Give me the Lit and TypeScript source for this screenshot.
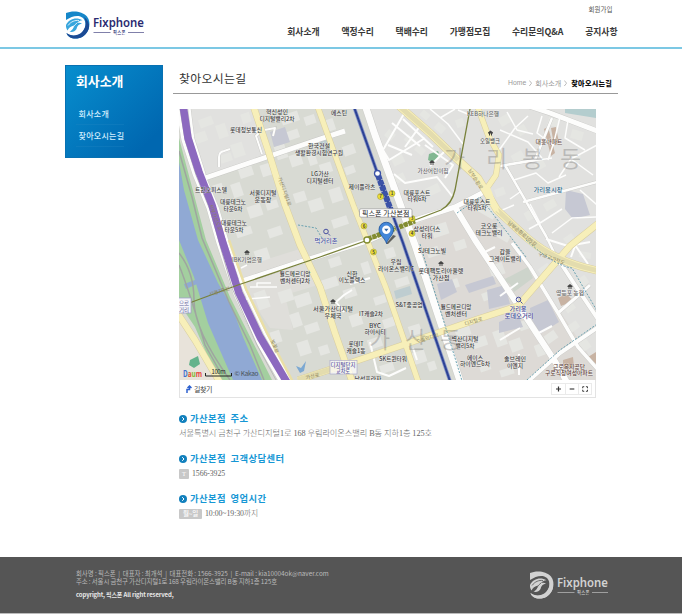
import { LitElement, html, svg, css } from "lit";
import { customElement, property } from "lit/decorators.js";

const FONT = css`"Noto Sans CJK KR", "Noto Sans CJK JP", "Noto Sans", sans-serif`;

@customElement("fix-logo")
class FixLogo extends LitElement {
  @property({ type: Boolean, reflect: true }) mono = false;
  static styles = css`
    :host { display: block; width: 80px; height: 29px; }
    svg { display: block; width: 80px; height: 29px; overflow: visible; }
    text { font-family: "Noto Sans", sans-serif; font-weight: 600; }
    .ko { font-family: ${FONT}; font-weight: 500; }
  `;
  render() {
    const c = this.mono
      ? { a: "#d2d2d2", b: "#d2d2d2", d: "#d2d2d2", t: "#d2d2d2", bg: "#555" }
      : { a: "#1687c9", b: "#38a6dd", d: "#1b4a94", t: "#2a2a70", bg: "#fff" };
    return html`<svg viewBox="0 0 80 29">
      <path fill=${c.a} d="M1 2C7-.6 17-.4 22 5.5C27 12 24 22 17 26C11 29.2 3 27.500 1.500 22C5 25.500 12 25.500 16 22.500C21 18.500 22 11 18 7C14 3.300 7 4.800 1 9Z"/>
      <path fill=${c.d} d="M19 6C26 11 26 20 18 25.500C11 29.500 3 27.500 1.500 22C6 25.500 12 25 16 22C21 17.500 22 11 19 6Z"/>
      <path fill=${c.b} d="M1 14C4 8 11 5.800 17.500 9.200C15 9.500 13 10.500 12 12C14 11.500 16 11.700 17 12.500C14 13 12 15 11.500 18C10 20.500 7 21.500 4.500 20.500C8 19 8.500 16.500 9 14.500C6 15 3.500 17 2.500 19.500C1.500 18 .8 16 1 14Z"/>
      <path fill="none" stroke=${c.bg} stroke-width=".8" d="M3 14.500C6 10.500 10 9 14 9.500M5 19C8 17.500 9 14 12 12"/>
      <text x="28" y="15.800" font-size="12" textLength="51" lengthAdjust="spacingAndGlyphs" fill=${c.t}>Fixphone</text>
      <path stroke=${c.t} stroke-width=".6" d="M28.500 21.500H45.500M63 21.500H79"/>
      <text class="ko" x="48" y="23.200" font-size="4.300" textLength="12.500" fill=${c.t}>픽스폰</text>
    </svg>`;
  }
}

type Label = [number, number, string, number, string?];

// Centre x, baseline y, text, drawn width, optional colour.
const LABELS: Label[] = [
  [277, 114, "혁신성인", 22], [277, 120.500, "디지털밸리2차", 35],
  [246, 132, "롯데정보통신", 32],
  [319, 148, "한국건설", 22], [319, 155, "생활환경시험연구원", 48],
  [339, 114.500, "에스틴", 16],
  [483, 115.500, "KEB하나은행", 32, "#666"],
  [490, 143, "오일뱅크", 20, "#555"],
  [549, 144, "대흥아파트", 27, "#6b5048"],
  [433, 173, "가산어린이집", 31, "#666"],
  [320, 176, "LG가산", 18], [320, 183, "디지털센터", 27],
  [362, 188.500, "제이플라츠", 27],
  [548, 192, "가리봉시장", 29, "#2b6488"],
  [211, 192, "트윈오피스텔", 32],
  [263, 194.500, "서울디지털", 27], [263, 201.500, "운동장", 17],
  [233, 204, "대륭테크노", 26], [233, 211, "타운6차", 19],
  [234, 225, "대륭테크노", 26], [234, 232, "타운5차", 19],
  [417, 194.500, "대륭포스트", 27], [417, 201, "타워6차", 19],
  [477, 203.500, "대륭포스트", 27], [477, 210, "타워5차", 19],
  [489, 228, "코오롱", 17], [489, 235, "테크노밸리", 27],
  [427, 231, "삼성리더스", 27], [427, 237.500, "타워", 11],
  [326, 242.500, "먹거리촌", 23, "#474fa0"],
  [432, 252.500, "SJ테크노빌", 28],
  [505, 254, "갑을", 11], [505, 260.500, "그레이트밸리", 32],
  [396, 264, "우림", 11], [396, 270.500, "라이온스밸리C", 36],
  [247, 261.500, "IBK기업은행", 30, "#666"],
  [441, 272.500, "롯데팩토리아울렛", 45], [441, 279.500, "가산점", 17],
  [295, 275.500, "월드메르디앙", 31], [295, 282.500, "벤처센터2차", 30],
  [352, 275.500, "신한", 11], [352, 282, "이노플렉스", 27],
  [570, 295, "영등포 농협", 28, "#666"],
  [333, 310.500, "서울가산디지털", 40], [333, 317.500, "우체국", 17],
  [371, 316, "IT캐슬2차", 24],
  [409, 307, "S&T중공업", 27],
  [456, 308.500, "월드메르디앙", 31], [456, 315.500, "벤처센터", 22],
  [518, 310.500, "가리봉", 17, "#3b4394"], [519, 318, "로데오거리", 29, "#3b4394"],
  [375, 327.500, "BYC", 12], [375, 334, "하이시티", 21],
  [356, 345.500, "롯데IT", 15], [356, 352.500, "캐슬1동", 19],
  [465, 341, "벽산디지털", 27], [465, 348, "밸리5차", 19],
  [393, 361, "SK트윈타워", 28],
  [475, 359.500, "에이스", 16], [475, 366.200, "하이엔드6차", 30],
  [515, 360.500, "솔브레인", 22], [515, 367.500, "이엔지", 16],
  [343, 366.500, "디지털단지", 25, "#5c5a9c"], [343, 372.700, "교차로", 14, "#5c5a9c"],
  [569, 368.500, "근로복지공단", 32, "#5b4038"], [569, 375, "구로직장여성아파트", 48, "#5b4038"],
  [368, 381, "남성프라자", 27],
];

// Blocks drawn as rotated rectangles: x, y, width, height, angle.
const BUILDINGS: number[][] = [
  [206, 122, 14, 9, -20], [199, 138, 16, 10, -20], [222, 131, 10, 14, -18], [226, 158, 12, 8, -18],
  [238, 150, 12, 14, -18], [246, 118, 9, 10, -18], [290, 118, 18, 10, -18], [292, 135, 14, 9, -18],
  [281, 152, 11, 14, -18], [296, 160, 12, 12, -18], [312, 158, 8, 14, -18], [326, 168, 12, 10, -18],
  [246, 172, 14, 10, -18], [266, 170, 10, 12, -18], [237, 190, 10, 14, -18], [272, 205, 12, 8, -18],
  [255, 211, 14, 12, -18], [218, 188, 10, 8, -18], [244, 232, 16, 8, -18], [275, 232, 14, 9, -18],
  [300, 197, 12, 10, -18], [316, 205, 14, 12, -18], [336, 195, 12, 14, -18], [340, 222, 16, 9, -18],
  [349, 150, 12, 10, -20], [350, 170, 10, 8, -20], [310, 120, 11, 9, -18], [330, 125, 9, 12, -18],
  [262, 255, 14, 12, -18], [230, 266, 8, 12, -18], [262, 300, 12, 18, -20], [286, 296, 14, 12, -18],
  [303, 300, 16, 12, -18], [296, 320, 10, 14, -18], [312, 328, 14, 9, -18], [304, 348, 12, 14, -18],
  [324, 350, 10, 9, -18], [276, 337, 10, 12, -18], [335, 262, 12, 9, -18], [330, 283, 16, 10, -18],
  [350, 293, 13, 9, -18], [366, 268, 8, 12, -18], [356, 320, 12, 12, -18], [375, 343, 14, 10, -18],
  [380, 300, 12, 8, -18], [402, 282, 14, 8, -18], [391, 322, 16, 9, -18], [415, 330, 12, 10, -18],
  [387, 368, 14, 8, -18], [417, 358, 18, 12, -18], [432, 366, 8, 9, -18], [390, 253, 10, 10, -18],
  [440, 230, 16, 12, -18], [433, 252, 12, 9, -18], [460, 245, 12, 9, -18], [450, 285, 18, 9, -18],
  [488, 210, 18, 12, 30], [503, 235, 15, 9, 30], [497, 270, 14, 12, -20], [490, 295, 16, 8, -20],
  [463, 332, 15, 9, -18], [480, 342, 14, 10, -18], [500, 338, 11, 16, -20], [516, 345, 12, 12, -20],
  [485, 367, 11, 8, -18], [507, 372, 14, 7, -18], [525, 325, 12, 9, -20], [540, 350, 9, 12, -20],
  [545, 270, 12, 9, -35], [568, 305, 10, 14, -35], [582, 282, 12, 9, -35], [551, 337, 12, 9, -35],
  [573, 327, 12, 8, -35], [585, 345, 9, 10, -35], [570, 240, 10, 10, -35], [585, 255, 12, 6, 10],
  [460, 123, 8, 8, -20], [505, 120, 12, 9, -30], [522, 130, 9, 9, -30], [518, 157, 12, 9, -30],
  [553, 122, 10, 8, 15], [577, 135, 12, 9, 15], [575, 158, 10, 9, 15], [540, 165, 10, 8, -30],
  [500, 192, 10, 8, -20], [530, 215, 10, 9, -30], [550, 205, 12, 8, -30], [410, 140, 10, 8, 40],
  [390, 135, 9, 8, 40], [398, 160, 12, 9, -25], [420, 150, 10, 7, 40], [400, 178, 10, 8, -25],
  [433, 190, 14, 9, -25], [440, 128, 10, 8, 40], [425, 115, 9, 7, 40],
];

const WHITE: [string, number][] = [
  ["M178 104L184 140L195 174L209 208L219 243L236 294L257 339L283 384", 5],
  ["M189 105L193 138L204 173L205 178L218 209L227 240L244 290L265 334L293 384", 2.500],
  ["M205 178L320 139L345 131", 5],
  ["M264 128L256 136L262 154M249 133L275 128L273 136", 2],
  ["M219 167V157Q219 152 224 151L230 149", 2],
  ["M236 283L300 262L370 240L415 220L455 207L484 192", 5],
  ["M365 105L375 135L415 245L432 297L461 384", 7],
  ["M455 207L475 240L518 305L556 363L568 384", 6],
  ["M505 165L546 236L560 265M500 166L535 160L552 118M523 202L560 192L597 182", 2.500],
  ["M526 105L550 113L600 132", 5],
  ["M512 243L530 267L558 313L578 347L600 372", 3.500],
  ["M562 265L577 288L600 322", 4],
  ["M525 384L560 353L600 326", 4],
  ["M558 313L580 294L590 285", 3],
  ["M405 112L383 150L389 160L425 138M392 123L420 146M403 119L433 147M420 126L405 147M388 145L412 155M425 145L453 165L445 178M394 174L405 183L437 177L452 196M430 166L440 156L446 150", 2],
  ["M430 109L448 124L463 144M440 118L455 109M458 110L470 115M497 153L515 128L528 116M500 130L528 142L542 158M507 112L517 130L533 134M542 116L537 133L553 145L548 160M560 117L553 146M568 120L565 138L585 150M597 145L571 159L559 177M571 159L593 175M505 165L552 158M514 180L536 173L548 183L566 175M520 192L510 199M530 204L540 223L562 209M540 223L529 229M500 211L514 205M580 190L597 205M552 233L572 218L597 217", 1.500],
  ["M546 239L568 246L590 242M575 245L588 264M575 246L571 257", 2],
  ["M350 284L370 278M344 312L336 302L344 295L352 290M370 342L377 372L389 376L406 368M413 348L417 360", 2],
  ["M250 287H277M257 287V283H271M237 300L270 297M241 268L247 265", 1.500],
  ["M500 296L518 283M500 340L520 328M519 354V375M535 335L552 326M483 253L495 247", 2],
];

const YELLOW: [string, number][] = [
  ["M178 314L195 340L222 386", 7],
  ["M253 105L268 150L285 205L300 245L320 287L335 333L353 384", 7],
  ["M317 105L335 155L354 207L367 240L386 288L405 343L419 384", 6],
  ["M477 105L488 135L499 155L496 175L487 188", 6],
  ["M398 105L430 133L458 160L478 178L497 210L526 237Q556 263 600 271", 8],
  ["M600 222L570 246L518 306L475 320L400 346L350 363L298 380", 7],
];

@customElement("area-map")
class AreaMap extends LitElement {
  static styles = css`
    :host { display: block; height: 271px; }
    svg { display: block; width: 417px; height: 271px; }
    text { font-family: ${FONT}; }
    .label { font-size: 6.2px; fill: #3a3a3a; font-weight: 500; paint-order: stroke; stroke: #ffffffb0; stroke-width: .7px; text-anchor: middle; }
    .road { font-size: 5px; fill: #8b8460; text-anchor: middle; }
    .big { font-size: 23px; fill: #55555548; font-weight: 400; }
    .poi { fill: none; stroke-width: 1; }
    .exit { font-size: 4.500px; fill: #444; text-anchor: middle; font-weight: 700; }
  `;
  render() {
    const exits: [number, number, string][] = [[380.500, 196.500, "7"], [392, 193.500, "1"], [364, 226, "6"], [373.500, 252, "5"], [412, 218.500, "3"], [412, 233.500, "4"]];
    const shops = [[490.500, 133.500], [432, 163], [247, 253], [333, 302], [441, 264], [570, 287]];
    return html`<svg viewBox="179 109 417 271">
      <rect x="179" y="109" width="417" height="271" fill="#d8dad3"/>
      <path fill="#e1e1df" d="M189 109H254L270 155L206 178L193 140ZM365 109H596V380H461L415 245Z"/>
      <path fill="#dddad6" d="M478 195L515 243L600 372V380H461L432 297L415 225Z"/>
      <path fill="#dfdeda" d="M232 270L303 248L318 285L285 295L293 330L270 328Z"/>
      <path fill="#e8e3da" d="M179 314L220 380H179Z"/>
      <g fill="#e5e6e2">${BUILDINGS.map(([x, y, w, h, a]) => svg`<rect x=${x - w / 2} y=${y - h / 2} width=${w} height=${h} transform="rotate(${a} ${x} ${y})"/>`)}</g>
      <g fill="#c6c8d3">
        <path d="M270 132L285 127L290 142L274 147ZM465 285L493 276L496 284L469 293ZM487 290L505 285L510 304L489 309ZM499 322L518 314L523 327L499 333ZM530 308L548 300L559 322L540 334L531 318Z"/>
        <path d="M437 284L452 279L457 292L441 300ZM566 190L583 194L590 215L573 219L565 209Z"/>
        <path fill="#becdd0" d="M394 291L410 286L412 294L396 299ZM319 140L331 138L333 150L322 152Z"/>
        <path fill="#cdd4cb" d="M503 280L528 267L533 278L514 292L510 284Z"/>
      </g>
      <path fill="#b4cdce" d="M565 109H596V118L565 113Z"/>
      <path fill="#c8b3a3" d="M544 129L548 127L555 153L551 156ZM551 128L556 127L559 143L554 145ZM558 298L566 294L574 301L561 306ZM563 360L573 357L574 367L563 370ZM588 357L596 352V364Z"/>
      <path fill="#82b892" d="M429 154L438 151L440 156L434 163L428 160Z"/>
      <path fill="#7ca8d2" d="M296 366L301 368L306 361L304 371L300 373Z"/>

      <path fill="#a3cf9f" d="M179 138L188 172L206 240L230 297L272 380H218L195 327L179 303Z"/>
      <path fill="#90a9d4" d="M179 162L184 190L198 240L218 283L232 307L243 337L262 380H233L208 323L194 277L179 240Z"/>
      <path fill="#90a9d4" d="M184 284L195 280L197 284L186 289Z"/>
      <g fill="none" stroke="#9fa5a0" stroke-width="1.500">
        <path d="M179 151L192 197L202 238L229 302L250 345L264 380"/>
        <path d="M179 253Q194 272 194 300Q194 330 230 380M179 265Q189 290 205 345L219 370"/>
      </g>
      <g fill="none" stroke="#c8c8c5">${WHITE.slice(0, 14).map(([d, w]) => svg`<path d=${d} stroke-width=${w + 0.8}/>`)}</g>
      <g fill="none" stroke="#fdfdfc" stroke-linejoin="round">${WHITE.map(([d, w]) => svg`<path d=${d} stroke-width=${w}/>`)}</g>
      <g fill="none" stroke="#d8cea0" stroke-linejoin="round">${YELLOW.map(([d, w]) => svg`<path d=${d} stroke-width=${w}/>`)}</g>
      <g fill="none" stroke="#f7efb9" stroke-linejoin="round">${YELLOW.map(([d, w]) => svg`<path d=${d} stroke-width=${w - 1}/>`)}</g>
      <path fill="none" stroke="#e3dcae" stroke-width="5" d="M398 105L430 133L458 160M497 210L526 237Q556 263 600 271M298 380L350 363"/>
      <path fill="#f7efb9" d="M484 187L490 187L500 214L494 209Z"/>
      <path fill="none" stroke="#eadfa5" stroke-width="2.500" d="M229 240L246 289L267 333L294 384"/>
      <g fill="none" stroke="#5c9aab" stroke-width=".9" stroke-dasharray="2 1.500">
        <path d="M298 225L316 228L322 238M420 244L463 384M457 213L480 197L526 257M526 240Q555 266 572 268L600 316M527 380L560 350L600 322"/>
      </g>

      <path fill="none" stroke="#bababa" stroke-width="1" d="M180 109L185 140L196 175L210 210L232 288L257 345L276 380"/>
      <path fill="none" stroke="#8c69bf" stroke-width="7.500" stroke-linejoin="round" d="M183 105L188 138L199 172L212 205L222 240L239 293L260 337L288 384"/>
      <path fill="none" stroke="#78813a" stroke-width="1.300" d="M179 306L192 302L238 285L320 257L368 240L415 220L441 210Q452 204 455 190L470 109"/>
      <path stroke="#838d31" stroke-width="5" d="M368 239L415 221" stroke-dasharray="4 .8"/>
      <path fill="none" stroke="#8996c8" stroke-width="3.600" d="M354 107L377 172L403 243L435 337L451 384"/>
      <path fill="none" stroke="#2c4295" stroke-width="2" d="M354 107L377 172L403 243L435 337L451 384"/>
      <path stroke="#3b52a7" stroke-width="6" stroke-dasharray="5 .8" d="M378 175L393 216"/>

      <text class="big" x="444" y="167">가</text><text class="big" x="486" y="167">리</text>
      <text class="big" x="522" y="167">봉</text><text class="big" x="560" y="167">동</text>
      <text class="big" x="369" y="348">가</text><text class="big" x="405" y="348">산</text><text class="big" x="440" y="348">동</text>

      <text class="road" transform="translate(283 192) rotate(70)">가산디지털1로</text>
      <text class="road" transform="translate(214 218) rotate(70)">서부간선도로</text>
      <text class="road" transform="translate(220 293) rotate(-17)">서울7호선</text>
      <text class="road" transform="translate(273 347) rotate(68)">벚꽃로</text>
      <text class="road" transform="translate(474 180) rotate(58)">남부순환로</text>
      <text class="road" transform="translate(521 235) rotate(40)">남부순환로105길</text>
      <text class="road" transform="translate(551 260) rotate(20)">구로고가차도</text>
      <text class="road" transform="translate(474 323) rotate(-17)">디지털로</text>
      <text class="road" transform="translate(428 340) rotate(-17)">수출의다리</text>
      <text class="road" transform="translate(313 378) rotate(-15)">가산로</text>

      <rect x="330" y="360.500" width="27" height="13.500" fill="#ffffffb0" stroke="#a2a0ca" stroke-width=".6"/>
      <rect x="174" y="298" width="17" height="15" fill="#f5f5fa" stroke="#a2a0ca" stroke-width=".8"/>
      <text x="179" y="305" font-size="5.500" fill="#66669b">으로</text><text x="179" y="311.500" font-size="5.500" fill="#66669b">거리</text>
      <path fill="#64b38c" d="M190 360L198 356L200 364L194 368L189 365Z"/>

      ${shops.map(([x, y]) => svg`<path fill="#444" d="M${x - 2.500} ${y - 1}l2.500-2l2.500 2v1h-1v2h-1v-2h-1v2h-1v-2h-1Z"/>`)}
      <g class="poi" stroke="#474fa0"><circle cx="326" cy="231.500" r="2.300"/><path d="M328 233.500l2 2"/><circle cx="518.500" cy="299.500" r="2.300"/><path d="M520.500 301.500l2 2"/></g>
      ${LABELS.map(([x, y, s, w, c]) => svg`<text class="label" x=${x} y=${y} textLength=${w} lengthAdjust="spacingAndGlyphs" style=${c ? `fill:${c}` : ""}>${s}</text>`)}
      ${exits.map(([x, y, s]) => svg`<circle cx=${x} cy=${y} r="3" fill="#ecdf35" stroke="#938e35" stroke-width=".5"/><text class="exit" x=${x} y=${y + 1.600}>${s}</text>`)}
      <circle cx="377.500" cy="173.500" r="3" fill="#fff" stroke="#3b52a7" stroke-width="1.300"/><circle cx="367" cy="240" r="3" fill="#fff" stroke="#838d31" stroke-width="1.300"/>
      <path fill="#222a" d="M386 244L393 235L396 236L388 244Z"/>
      <path fill="#4387d8" stroke="#1d5298" stroke-width=".8" d="M386.500 243.500C385 238 379 235 379 229.500A7.200 7.200 0 0 1 393.500 229.500C393.500 235 388 238 386.500 243.500Z"/>
      <circle cx="386.300" cy="229.800" r="4.200" fill="#fff"/><path fill="#2f66a8" d="M384.200 228.800H388.500L386.300 231.500Z"/>
      <rect x="359.500" y="208.800" width="52.500" height="8.400" rx="1.500" fill="#fff" stroke="#999" stroke-width=".7"/>
      <text x="362" y="215.500" font-size="7" fill="#222" textLength="47.500">픽스폰 가산본점</text>

      <text x="183" y="376.500" font-size="8.500" font-weight="700" textLength="19" lengthAdjust="spacingAndGlyphs"><tspan fill="#3f70ce">D</tspan><tspan fill="#e5533e">a</tspan><tspan fill="#7fb92e">u</tspan><tspan fill="#e64439">m</tspan></text>
      <path fill="none" stroke="#222" d="M205.500 373V376H231.500V373"/>
      <text x="211.500" y="374.300" font-size="5.800" fill="#222" textLength="14">100m</text>
      <text x="234.500" y="376" font-size="6.500" fill="#4b555c" textLength="24">© Kakao</text>
    </svg>`;
  }
}

@customElement("app-root")
class AppRoot extends LitElement {
  static styles = css`
    :host { display: block; width: 682px; height: 614px; overflow: hidden; background: #fff; font-family: ${FONT}; color: #333; }
    * { box-sizing: border-box; }
    .page { display: flex; flex-direction: column; height: 614px; }
    header { height: 49px; border-bottom: 2px solid #7cc8e4; padding: 11px 64.500px 0 65px; display: flex; justify-content: space-between; flex: none; }
    .right { display: flex; flex-direction: column; align-items: flex-end; margin-top: -8px; white-space: nowrap; }
    .join { font-size: 6.5px; line-height: 13px; color: #555; padding-right: 5px; }
    nav { display: flex; gap: 21.8px; margin-top: 9px; font-size: 8.8px; line-height: 13px; font-weight: 700; color: #383838; }
    .main { display: flex; padding: 15.500px 65px 0; flex: 1; }
    aside { width: 97.500px; height: 93px; flex: none; background: linear-gradient(135deg, #078ece, #0067b0 85%); border: 1px solid #0871b2; color: #fff; padding: 6.500px 10px 0; }
    aside h2 { margin: 0; font-size: 12.9px; line-height: 18px; font-weight: 700; }
    aside ul { list-style: none; margin: 12.500px 0 0; padding: 0; }
    aside li { font-size: 8px; line-height: 21px; height: 22px; padding-left: 2.500px; color: #d5efff; font-weight: 500; letter-spacing: .28px; white-space: nowrap; border-bottom: 1px solid #2387c44d; width: 48px; }
    .content { margin-left: 10.500px; width: 445px; flex: none; }
    .head { display: flex; justify-content: space-between; align-items: flex-end; height: 29px; border-bottom: 1px solid #999; padding: 0 6px 0 6px; white-space: nowrap; }
    h1 { margin: 0 0 7px; font-size: 11.900px; font-weight: 400; line-height: 16px; letter-spacing: .3px; color: #333; }
    .crumbs { display: flex; gap: 3px; font-size: 7.1px; line-height: 12px; color: #999; margin-bottom: 4px; }
    .crumbs .en { font-family: "Liberation Sans", sans-serif; font-size: 6.800px; }
    .crumbs svg { width: 3px; height: 12px; }
    .crumbs b { color: #111; font-weight: 900; margin-left: 1px; letter-spacing: .25px; }
    .map { margin: 15.500px 0 0 6px; width: 417px; }
    .bar { height: 18px; border: 1px solid #e3e3e3; border-top: 0; display: flex; justify-content: space-between; align-items: center; padding: 0 3px 0 5px; }
    .route { display: flex; align-items: center; gap: 2px; font-size: 7px; line-height: 12px; color: #444; letter-spacing: -.4px; }
    .tools { display: flex; border: 1px solid #eaeaea; height: 12px; }
    .tools svg { display: block; width: 13px; height: 10px; }
    .tools svg + svg { border-left: 1px solid #eaeaea; }
    section { margin: 0 0 0 6px; height: 40.200px; }
    .first { margin-top: 14px; }
    h3 { margin: 0; display: flex; align-items: center; gap: 3px; font-size: 9.3px; line-height: 13px; color: #1697d5; font-weight: 700; letter-spacing: .45px; word-spacing: 2px; white-space: nowrap; }
    h3 svg { width: 8px; height: 8px; flex: none; }
    .line { display: flex; align-items: center; gap: 3px; font-family: "Liberation Serif", "Noto Sans CJK KR", "Noto Sans CJK JP", serif; font-size: 7.8px; line-height: 12px; margin-top: 2.500px; color: #666; white-space: nowrap; font-weight: 300; letter-spacing: -.08px; }
    .addr { font-size: 8.2px; letter-spacing: -.07px; }
    .tag { background: #c8c8c8; color: #fff; font-size: 6.5px; line-height: 10px; height: 10px; text-align: center; width: 10px; border-radius: 1px; font-weight: 500; }
    .tag.wide { width: 23px; }
    footer { flex: none; height: 57px; background: #555; border-bottom: 1px solid #bbb; padding: 12.500px 65px 0 76px; display: flex; justify-content: space-between; font-size: 6.4px; line-height: 8.500px; color: #bbb; white-space: nowrap; }
    footer p { margin: 0; letter-spacing: -.11px; }
    footer .l1 { letter-spacing: -.04px; }
    footer .copy { margin-top: 4px; color: #e8e8e8; font-weight: 600; font-size: 6px; letter-spacing: -.14px; }
    footer fix-logo { margin: 1.500px 8px 0 0; }
  `;
  private section(title: string, body: unknown, first = false) {
    return html`<section class=${first ? "first" : ""}>
      <h3><svg viewBox="0 0 8 8"><circle cx="4" cy="4" r="4" fill="#1180bd"/><path d="M3.200 2.200L5 4L3.200 5.800" fill="none" stroke="#fff"/></svg>${title}</h3>
      ${body}
    </section>`;
  }
  render() {
    const nav = ["회사소개", "액정수리", "택배수리", "가맹점모집", "수리문의Q&A", "공지사항"];
    const arrow = html`<svg viewBox="0 0 3 12"><path d="M.3 3.500L2.600 6.200L.3 9" fill="none" stroke="#aaa" stroke-width=".8"/></svg>`;
    return html`<div class="page">
      <header>
        <fix-logo></fix-logo>
        <div class="right"><span class="join">회원가입</span><nav>${nav.map((n) => html`<span>${n}</span>`)}</nav></div>
      </header>
      <div class="main">
        <aside><h2>회사소개</h2><ul><li>회사소개</li><li>찾아오시는길</li></ul></aside>
        <div class="content">
          <div class="head"><h1>찾아오시는길</h1>
            <div class="crumbs"><span class="en">Home</span>${arrow}<span>회사소개</span>${arrow}<b>찾아오시는길</b></div></div>
          <div class="map"><area-map></area-map>
            <div class="bar">
              <span class="route"><svg width="7" height="8" viewBox="0 0 7 8"><path d="M2 8V4.500H4.500V1.500M2.500 3L4.500 1L6.500 3" fill="none" stroke="#2f62cf" stroke-width="1.500"/></svg>길찾기</span>
              <span class="tools">
                <svg viewBox="0 0 13 10"><path d="M4 5H9M6.500 2.500V7.500" stroke="#333" stroke-width="1.200"/></svg>
                <svg viewBox="0 0 13 10"><path d="M4 5H9" stroke="#333" stroke-width="1.200"/></svg>
                <svg viewBox="0 0 13 10"><path d="M4 4.200V2.500H5.700M7.500 2.500H9.200V4.200M9.200 5.800V7.500H7.500M5.700 7.500H4V5.800" fill="none" stroke="#333" stroke-width="1"/></svg>
              </span>
            </div>
          </div>
          ${this.section("가산본점 주소", html`<div class="line addr">서울특별시 금천구 가산디지털1로 168 우림라이온스밸리 B동 지하1층 125호</div>`, true)}
          ${this.section("가산본점 고객상담센터", html`<div class="line"><span class="tag">T</span>1566-3925</div>`)}
          ${this.section("가산본점 영업시간", html`<div class="line"><span class="tag wide">월~일</span>10:00~19:30까지</div>`)}
        </div>
      </div>
      <footer>
        <div>
          <p class="l1">회사명 : 픽스폰 &nbsp;|&nbsp; 대표자 : 최개석 &nbsp;|&nbsp; 대표전화 : 1566-3925 &nbsp;|&nbsp; E-mail : kia10004ok@naver.com</p>
          <p>주소 : 서울시 금천구 가산디지털1로 168 우림라이온스밸리 B동 지하1층 125호</p>
          <p class="copy">copyright, 픽스폰 All right reserved,</p>
        </div>
        <fix-logo mono></fix-logo>
      </footer>
    </div>`;
  }
}
